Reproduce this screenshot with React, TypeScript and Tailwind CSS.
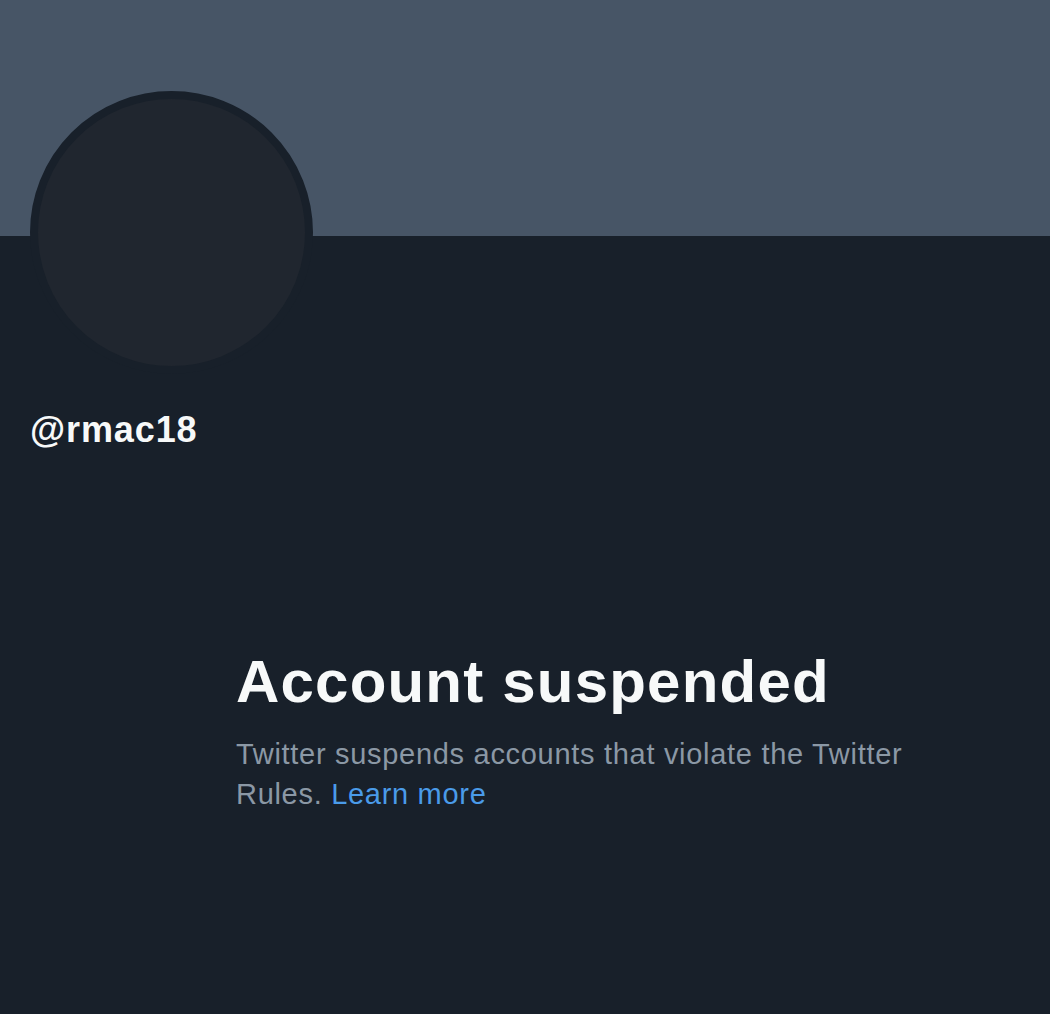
import React from 'react';

const App: React.FC = () => {
  return (
    <div
      className="w-[1050px] h-[1014px] bg-[#18202a] overflow-hidden"
      style={{ fontFamily: '"Liberation Sans", Arial, sans-serif' }}
    >
      <div className="h-[236px] bg-[#475566]" />
      <div className="px-[30px]">
        <div className="-mt-[145px] w-[283px] h-[283px] rounded-full border-[8px] border-[#18202a] bg-[#20262f]" />
        <div className="mt-[36px] text-[36px] leading-[40px] font-bold text-[#f7f9f9] tracking-[0.9px]">@rmac18</div>
      </div>
      <div className="ml-[236px] mt-[196px] w-[720px]">
        <h1 className="text-[60px] leading-[72px] font-bold text-[#f7f9f9] tracking-[1.2px]">Account suspended</h1>
        <p className="mt-[16px] text-[29px] leading-[40px] text-[#8b98a5] tracking-[0.7px]">
          Twitter suspends accounts that violate the Twitter
          <br />
          Rules. <a href="#" className="text-[#4a9be9]">Learn more</a>
        </p>
      </div>
    </div>
  );
};

export default App;
